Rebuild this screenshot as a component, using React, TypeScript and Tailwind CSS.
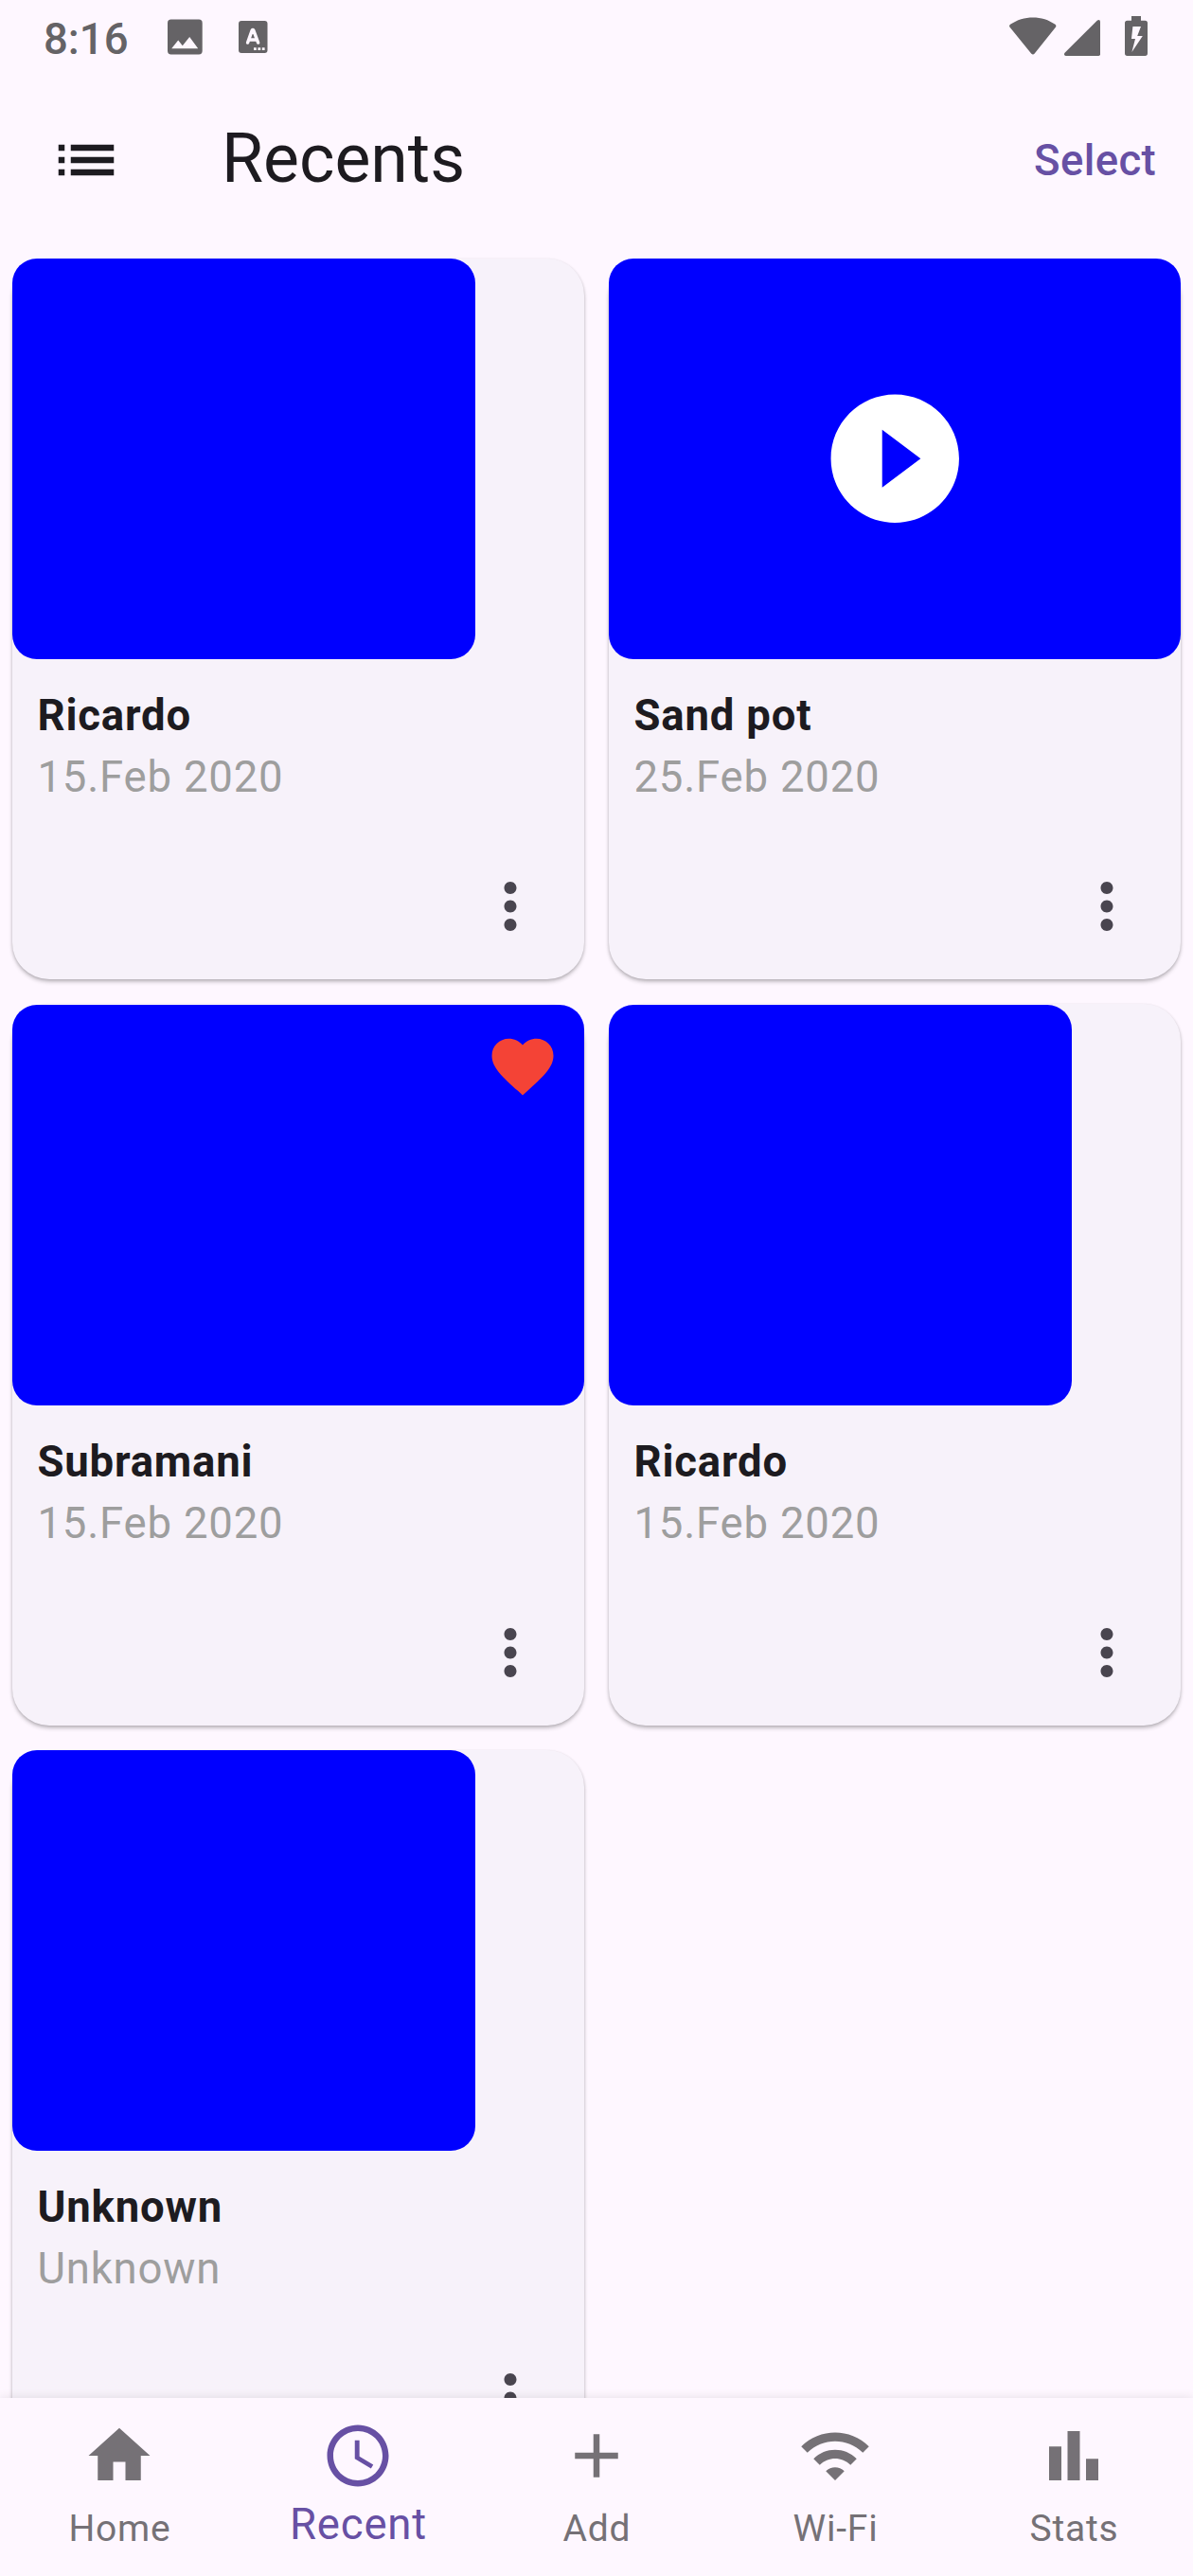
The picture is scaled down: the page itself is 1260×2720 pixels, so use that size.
import type { ReactNode } from "react";

function Icon({ d, className }: { d: string; className: string }) {
  return (
    <svg viewBox="0 0 24 24" fill="currentColor" className={className} aria-hidden="true">
      <path d={d} />
    </svg>
  );
}

const PATHS = {
  list: "M3 13h2v-2H3v2zm0 4h2v-2H3v2zm0-8h2V7H3v2zm4 4h14v-2H7v2zm0 4h14v-2H7v2zM7 7v2h14V7H7z",
  more: "M12 8c1.1 0 2-.9 2-2s-.9-2-2-2-2 .9-2 2 .9 2 2 2zm0 2c-1.1 0-2 .9-2 2s.9 2 2 2 2-.9 2-2-.9-2-2-2zm0 6c-1.1 0-2 .9-2 2s.9 2 2 2 2-.9 2-2-.9-2-2-2z",
  play: "M12 2C6.48 2 2 6.48 2 12s4.48 10 10 10 10-4.48 10-10S17.52 2 12 2zm-2 14.5v-9l6 4.5-6 4.5z",
  heart:
    "M12 21.35l-1.45-1.32C5.4 15.36 2 12.28 2 8.5 2 5.42 4.42 3 7.5 3c1.74 0 3.41.81 4.5 2.09C13.09 3.81 14.76 3 16.5 3 19.58 3 22 5.42 22 8.5c0 3.78-3.4 6.86-8.55 11.54L12 21.35z",
  home: "M10 20v-6h4v6h5v-8h3L12 3 2 12h3v8z",
  clock:
    "M11.99 2C6.47 2 2 6.48 2 12s4.47 10 9.99 10C17.52 22 22 17.52 22 12S17.52 2 11.99 2zM12 20c-4.42 0-8-3.58-8-8s3.58-8 8-8 8 3.58 8 8-3.58 8-8 8zm.5-13H11v6l5.25 3.15.75-1.23-4.5-2.67z",
  add: "M19 13h-6v6h-2v-6H5v-2h6V5h2v6h6v2z",
  wifi: "M1 9l2 2c4.97-4.97 13.03-4.97 18 0l2-2C16.93 2.93 7.08 2.93 1 9zm8 8l3 3 3-3c-1.65-1.66-4.34-1.66-6 0zm-4-4l2 2c2.76-2.76 7.24-2.76 10 0l2-2C15.14 9.14 8.87 9.14 5 13z",
  stats: "M4 9h4v11H4zm12 4h4v7h-4zm-6-9h4v16h-4z",
};

type Item = { name: string; date: string; wide?: boolean; video?: boolean; liked?: boolean };

const items: Item[] = [
  { name: "Ricardo", date: "15.Feb 2020" },
  { name: "Sand pot", date: "25.Feb 2020", wide: true, video: true },
  { name: "Subramani", date: "15.Feb 2020", wide: true, liked: true },
  { name: "Ricardo", date: "15.Feb 2020" },
  { name: "Unknown", date: "Unknown" },
];

function Card({ item }: { item: Item }) {
  return (
    <article className="m-[13px] flex flex-col rounded-[39px] bg-[#f7f2fa] shadow-[0_3px_4px_0_rgba(0,0,0,0.2),0_1px_3px_0_rgba(0,0,0,0.14)]">
      <div
        className={`relative mt-[0.5px] flex h-[423px] shrink-0 items-center justify-center rounded-[26px] bg-[#0000ff] ${
          item.wide ? "w-full" : "w-[489px]"
        }`}
      >
        {item.video && <Icon d={PATHS.play} className="size-[162.5px] text-white" />}
        {item.liked && (
          <Icon d={PATHS.heart} className="absolute top-[26px] right-[26px] size-[78px] text-[#f44336]" />
        )}
      </div>
      <div className="px-[26.5px] pt-[27px] text-[45.5px] leading-[65px] tracking-[0.8px]">
        <h2 className="font-bold text-[#1d1b20]">{item.name}</h2>
        <p className="text-[#9e9e9e]">{item.date}</p>
      </div>
      <div className="flex justify-end pt-[65px] pr-[39px] text-[#49454f]">
        <Icon d={PATHS.more} className="size-[78px]" />
      </div>
    </article>
  );
}

function StatusBar() {
  return (
    <div className="flex h-[77px] shrink-0 items-start justify-between text-[#656366]">
      <div className="flex items-start pl-[46px]">
        <span className="w-[131px] pt-[15px] text-[45.5px] leading-[53px] font-medium">8:16</span>
        <svg viewBox="0 0 37 38" className="mt-5 h-[38px] w-[37px]" aria-hidden="true">
          <path
            fill="currentColor"
            fillRule="evenodd"
            d="M3.7 0.5h29.3a3.7 3.7 0 0 1 3.7 3.7v29.6a3.7 3.7 0 0 1-3.7 3.7H3.7A3.7 3.7 0 0 1 0 33.8V4.2A3.7 3.7 0 0 1 3.7 0.5zM4.2 31.2h28L23.2 19l-7.4 9.2-4.6-5.8z"
          />
        </svg>
        <svg viewBox="0 0 31 34" className="mt-[22px] ml-[38px] h-[34px] w-[31px]" aria-hidden="true">
          <rect width="30.5" height="34" rx="3" fill="currentColor" />
          <path d="M9.6 23L14.2 10.2Q15 8.9 15.8 10.2L20.6 23M11.5 19.9h7.2" fill="none" stroke="#fef7ff" strokeWidth="3.5" strokeLinecap="round" strokeLinejoin="round" />
          <path d="M16 28.2h2.8V31H16zM20.4 28.2h2.8V31h-2.8zM24.8 28.2h2.8V31h-2.8z" fill="#fef7ff" />
        </svg>
      </div>
      <div className="flex items-start pr-12">
        <svg viewBox="0 0 50 41" className="mt-[18px] h-[41px] w-[50px]" fill="currentColor" aria-hidden="true">
          <path d="M1 7.8C15-2 35-2 48.5 7.8q1.5 1.3.4 2.9L26.7 38.4q-1.7 2-3.6 0L.6 10.7q-1.2-1.6.4-2.9z" />
        </svg>
        <svg viewBox="0 0 38 38" className="mt-[21px] ml-2 h-[38px] w-[38px]" fill="currentColor" aria-hidden="true">
          <path d="M34.7.7Q35.7 0 36.5 0 38 0 38 1.7V36.3Q38 38 36.3 38H1.7Q0 38 0 36.2 0 35.3.8 34.5z" />
        </svg>
        <svg viewBox="0 0 24 42" className="mt-[17px] ml-[26px] h-[42px] w-6" aria-hidden="true">
          <path
            fill="currentColor"
            fillRule="evenodd"
            d="M7 0h10v4.7h4.4Q24 4.7 24 7.3v32Q24 42 21.4 42H2.6Q0 42 0 39.3v-32Q0 4.7 2.6 4.7H7zM8.4 11L7 24h4L7.4 38 18.8 21h-5.6L17 11z"
          />
        </svg>
      </div>
    </div>
  );
}

function NavItem({ label, active, children }: { label: string; active?: boolean; children: ReactNode }) {
  return (
    <button
      className={`flex flex-1 flex-col items-center pt-[22px] ${active ? "text-[#6750a4]" : "text-[#757176]"}`}
    >
      {children}
      <span
        className={
          active
            ? "pt-[7px] pl-px text-[45.5px] leading-[53px] tracking-[0.8px]"
            : "pt-[15px] pl-px text-[39px] leading-[46px] tracking-[0.8px]"
        }
      >
        {label}
      </span>
    </button>
  );
}

export default function App() {
  return (
    <div className="flex h-[2720px] w-[1260px] flex-col overflow-hidden bg-[#fef7ff] font-['Roboto',sans-serif]">
      <StatusBar />
      <header className="flex h-[182px] shrink-0 items-center pr-[39px] pl-[52px] text-[#1d1b20]">
        <Icon d={PATHS.list} className="mt-0.5 size-[78px]" />
        <h1 className="-mt-0.5 ml-[104px] flex-1 text-[71.5px] leading-[91px]">Recents</h1>
        <button className="mt-0.5 text-[45.5px] leading-[65px] font-medium tracking-[0.35px] text-[#6750a4]">
          Select
        </button>
      </header>
      <main className="grid min-h-0 flex-1 auto-rows-[787.5px] grid-cols-2 overflow-hidden pt-[0.5px]">
        {items.map((item, i) => (
          <Card key={i} item={item} />
        ))}
      </main>
      <nav className="relative flex h-[188px] shrink-0 bg-[#fef7ff] shadow-[0_0_10px_0_rgba(0,0,0,0.1)]">
        <NavItem label="Home">
          <Icon d={PATHS.home} className="size-[78px]" />
        </NavItem>
        <NavItem label="Recent" active>
          <Icon d={PATHS.clock} className="size-[78px]" />
        </NavItem>
        <NavItem label="Add">
          <Icon d={PATHS.add} className="size-[78px]" />
        </NavItem>
        <NavItem label="Wi-Fi">
          <Icon d={PATHS.wifi} className="size-[78px]" />
        </NavItem>
        <NavItem label="Stats">
          <Icon d={PATHS.stats} className="size-[78px]" />
        </NavItem>
      </nav>
    </div>
  );
}
